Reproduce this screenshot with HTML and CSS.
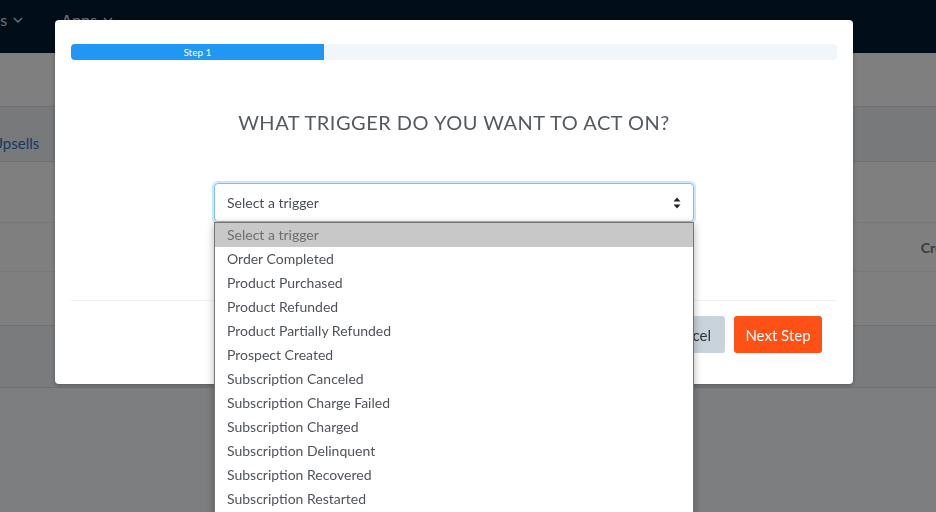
FILE: index.html
```html
<!DOCTYPE html>
<html lang="en">
<head>
<meta charset="utf-8">
<title>Automation - Select trigger</title>
<link rel="stylesheet" href="styles.css">
</head>
<body>
<div class="page">
  <header class="topnav">
    <ul class="menu">
      <li class="menu-item">Subscriptions <svg class="chev" viewBox="0 0 10 6" width="10" height="6"><path d="M1 1l4 4 4-4" fill="none" stroke="currentColor" stroke-width="1.4"/></svg></li>
      <li class="menu-item">Apps <svg class="chev" viewBox="0 0 10 6" width="10" height="6"><path d="M1 1l4 4 4-4" fill="none" stroke="currentColor" stroke-width="1.4"/></svg></li>
    </ul>
  </header>
  <div class="toolbar"></div>
  <nav class="tabs"><a class="tab" href="#">Upsells</a></nav>
  <div class="row"></div>
  <div class="row row-head"><span class="col-head">Created</span></div>
  <div class="row row-last"></div>
  <div class="table-foot"></div>
</div>

<div class="backdrop"></div>

<div class="modal">
  <div class="progress"><div class="progress-bar" style="width:33%">Step 1</div></div>
  <h2 class="title">WHAT TRIGGER DO YOU WANT TO ACT ON?</h2>
  <div class="select-wrap">
    <div class="select">
      <span>Select a trigger</span>
      <svg class="updown" viewBox="0 0 8 12" width="8" height="12"><path d="M4 0.5L7.5 4.5H0.5Z M4 11.5L0.5 7.5H7.5Z" fill="#222"/></svg>
    </div>
    <ul class="options">
      <li class="option selected">Select a trigger</li>
      <li class="option">Order Completed</li>
      <li class="option">Product Purchased</li>
      <li class="option">Product Refunded</li>
      <li class="option">Product Partially Refunded</li>
      <li class="option">Prospect Created</li>
      <li class="option">Subscription Canceled</li>
      <li class="option">Subscription Charge Failed</li>
      <li class="option">Subscription Charged</li>
      <li class="option">Subscription Delinquent</li>
      <li class="option">Subscription Recovered</li>
      <li class="option">Subscription Restarted</li>
      <li class="option">Subscription Updated</li>
    </ul>
  </div>
  <div class="modal-footer">
    <button class="btn btn-cancel">Cancel</button>
    <button class="btn btn-next">Next Step</button>
  </div>
</div>
</body>
</html>
```

FILE: styles.css
```css
html, body {
  margin: 0;
  padding: 0;
  height: 100%;
  overflow: hidden;
}
body {
  font-family: Lato, "Open Sans", sans-serif;
  background: #fafcff;
  color: #555;
}
.page {
  width: 936px;
}
.topnav {
  height: 53px;
  background: #021c34;
  overflow: hidden;
}
.menu {
  list-style: none;
  margin: 0 0 0 -87px;
  padding: 0;
  display: flex;
  gap: 38px;
  height: 39px;
  align-items: center;
}
.menu-item {
  color: #dfe5ec;
  font-size: 16px;
  display: flex;
  align-items: center;
  gap: 6px;
  white-space: nowrap;
}
.toolbar {
  height: 53px;
  background: #fff;
  border-bottom: 1px solid #dde1e7;
}
.tabs {
  height: 55px;
  box-sizing: border-box;
  padding-top: 18px;
  background: #f1f3f7;
  border-bottom: 1px solid #dde1e7;
  display: flex;
  align-items: center;
  overflow: hidden;
}
.tab {
  margin-left: -8px;
  color: #2d6fbf;
  text-decoration: none;
  font-size: 15px;
  white-space: nowrap;
}
.row {
  height: 60px;
  background: #fff;
  border-bottom: 1px solid #f0f1f4;
}
.row-head {
  height: 48px;
  display: flex;
  align-items: center;
  justify-content: flex-end;
  overflow: hidden;
}
.col-head {
  margin-right: -34px;
  font-weight: bold;
  font-size: 14px;
  color: #6d7785;
  white-space: nowrap;
}
.row-last {
  height: 53px;
  border-bottom: 1px solid #dde1e7;
}
.table-foot {
  height: 61px;
  background: #f4f6fa;
  border-bottom: 1px solid #dde1e7;
}
.backdrop {
  position: fixed;
  inset: 0;
  background: rgba(0, 0, 0, 0.5);
}
.modal {
  position: fixed;
  left: 55px;
  top: 20px;
  width: 798px;
  height: 364px;
  box-sizing: border-box;
  background: #fff;
  border-radius: 4px;
  box-shadow: 0 1px 4px rgba(0, 0, 0, 0.3);
  padding: 24px 16px 0;
  display: flex;
  flex-direction: column;
}
.progress {
  height: 16px;
  background: #f3f6f9;
  border-radius: 4px;
  overflow: hidden;
  display: flex;
}
.progress-bar {
  background: #2196f3;
  color: #fff;
  font-size: 10px;
  line-height: 16px;
  text-align: center;
}
.title {
  margin: 48px 0 0;
  font-size: 20px;
  font-weight: normal;
  line-height: 28px;
  text-align: center;
  color: #555a60;
  letter-spacing: 0.5px;
}
.select-wrap {
  position: relative;
  width: 480px;
  align-self: center;
  margin-top: 47px;
}
.select {
  height: 39px;
  box-sizing: border-box;
  border: 1px solid #80bdff;
  border-radius: 4px;
  box-shadow: 0 0 0 2px rgba(0, 123, 255, 0.2);
  padding: 0 12px;
  display: flex;
  align-items: center;
  justify-content: space-between;
  font-size: 14px;
  color: #4a4f55;
}
.options {
  position: absolute;
  left: 0;
  top: 100%;
  width: 480px;
  box-sizing: border-box;
  margin: 0;
  padding: 0;
  list-style: none;
  background: #fff;
  border: 1px solid #767676;
  box-shadow: 0 2px 8px rgba(0, 0, 0, 0.3);
  z-index: 2;
}
.option {
  height: 24px;
  line-height: 24px;
  padding-left: 12px;
  font-size: 14px;
  color: #4f545a;
}
.option.selected {
  background: #c8c8c8;
  color: #6e6e6e;
}
.modal-footer {
  margin-top: 78px;
  border-top: 1px solid #eef1f4;
  padding-top: 15px;
  display: flex;
  justify-content: flex-end;
  gap: 9px;
  padding-right: 15px;
}
.btn {
  height: 37px;
  border: none;
  border-radius: 3px;
  padding: 0 13px;
  font-family: Lato, "Open Sans", sans-serif;
  font-size: 15px;
  white-space: nowrap;
}
.btn-cancel {
  background: #c9d3dc;
  color: #333;
  padding: 0 14px;
}
.btn-next {
  background: #ff5115;
  color: #fff;
  width: 88px;
  padding: 0;
}
```
